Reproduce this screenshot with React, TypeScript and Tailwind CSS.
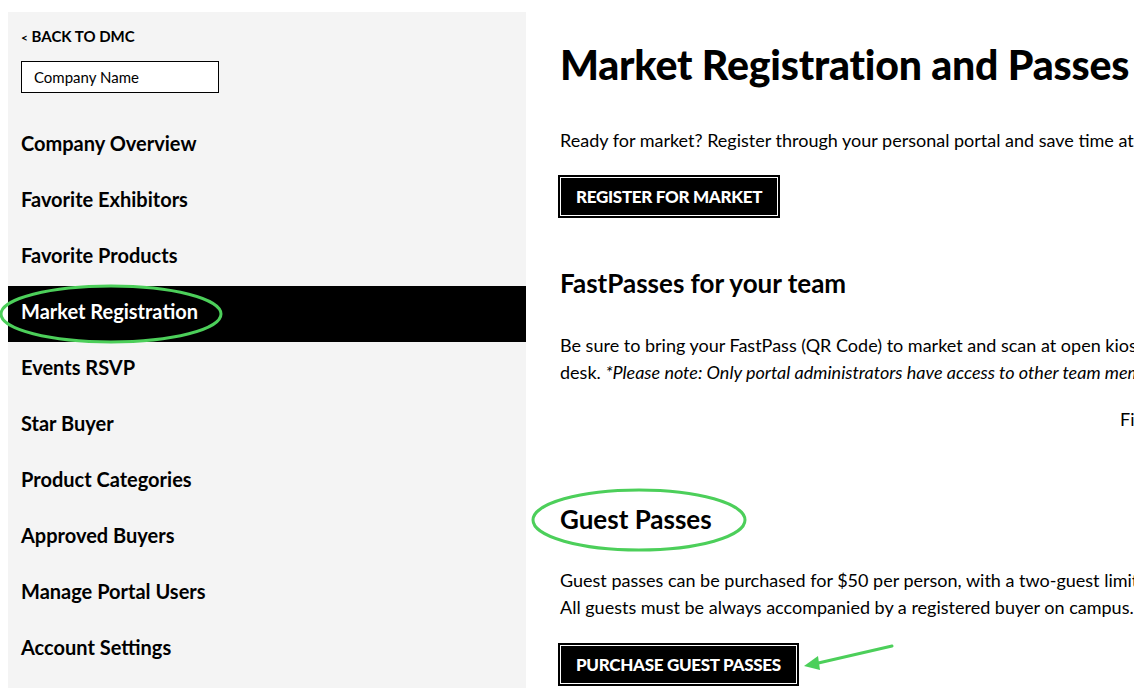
import React from "react";

const navItems = [
  "Company Overview",
  "Favorite Exhibitors",
  "Favorite Products",
  "Market Registration",
  "Events RSVP",
  "Star Buyer",
  "Product Categories",
  "Approved Buyers",
  "Manage Portal Users",
  "Account Settings",
];

function PortalButton({ label }: { label: string }) {
  return (
    <button className="border-2 border-black bg-white p-[1px]">
      <span className="block bg-black px-[15px] py-[9px] text-[17px] font-black uppercase leading-[19px] tracking-[-0.3px] text-white">
        {label}
      </span>
    </button>
  );
}

function Sidebar() {
  return (
    <aside className="mt-[12px] ml-[8px] h-[676px] w-[518px] shrink-0 bg-[#f4f4f4]">
      <div className="px-[13px] pt-[15px]">
        <a className="block text-[15px] font-bold leading-[19px] text-black">
          <span className="text-[12px]">&lt;</span> BACK TO DMC
        </a>
        <div className="mt-[14px] flex h-[32px] w-[198px] items-center border border-black bg-white px-[12px] text-[15px] text-black">
          Company Name
        </div>
      </div>
      <nav className="mt-[25px]">
        {navItems.map((item) => {
          const active = item === "Market Registration";
          return (
            <div
              key={item}
              className={`flex h-[56px] items-center px-[13px] pb-[6px] text-[20px] font-bold ${
                active ? "bg-black text-white" : "text-black"
              }`}
            >
              {item}
            </div>
          );
        })}
      </nav>
    </aside>
  );
}

function Annotations() {
  return (
    <svg
      className="pointer-events-none absolute left-0 top-0"
      width="1134"
      height="694"
      viewBox="0 0 1134 694"
    >
      <ellipse cx="111" cy="314" rx="110" ry="28" fill="none" stroke="#4ccf5a" strokeWidth="3" />
      <ellipse cx="639" cy="520" rx="106" ry="30" fill="none" stroke="#4ccf5a" strokeWidth="3" />
      <line x1="892" y1="646" x2="814" y2="664" stroke="#4ccf5a" strokeWidth="3" strokeLinecap="round" />
      <polygon points="804,666 818,656 820,670" fill="#4ccf5a" />
    </svg>
  );
}

export default function App() {
  return (
    <div
      className="relative flex h-[694px] w-[1134px] overflow-hidden bg-white text-black"
      style={{ fontFamily: "Lato, 'Noto Sans', sans-serif" }}
    >
      <Sidebar />
      <main className="ml-[34px] w-[900px] shrink-0 whitespace-nowrap">
        <h1 className="mt-[42px] text-[41px] font-black leading-[46px] tracking-[-0.2px]">
          Market Registration and Passes
        </h1>
        <p className="mt-[39px] text-[18px] leading-[26px]">
          Ready for market? Register through your personal portal and save time at check-in.
        </p>
        <div className="mt-[22px] -ml-[2px]">
          <PortalButton label="Register for Market" />
        </div>

        <h2 className="mt-[49px] text-[26px] font-bold leading-[32px]">FastPasses for your team</h2>
        <p className="mt-[33px] text-[18px] leading-[27px]">
          Be sure to bring your FastPass (QR Code) to market and scan at open kiosks or the registration
          <br />
          desk. <em>*Please note: Only portal administrators have access to other team members' FastPasses.</em>
        </p>
        <p className="mt-[20px] pl-[560px] text-[18px] leading-[27px]">Find your team below</p>

        <h2 className="mt-[70px] text-[26px] font-bold leading-[32px]">Guest Passes</h2>
        <p className="mt-[32px] text-[18px] leading-[27px]">
          Guest passes can be purchased for $50 per person, with a two-guest limit per registered buyer.
          <br />
          All guests must be always accompanied by a registered buyer on campus.
        </p>
        <div className="mt-[22px] -ml-[2px]">
          <PortalButton label="Purchase Guest Passes" />
        </div>
      </main>
      <Annotations />
    </div>
  );
}
